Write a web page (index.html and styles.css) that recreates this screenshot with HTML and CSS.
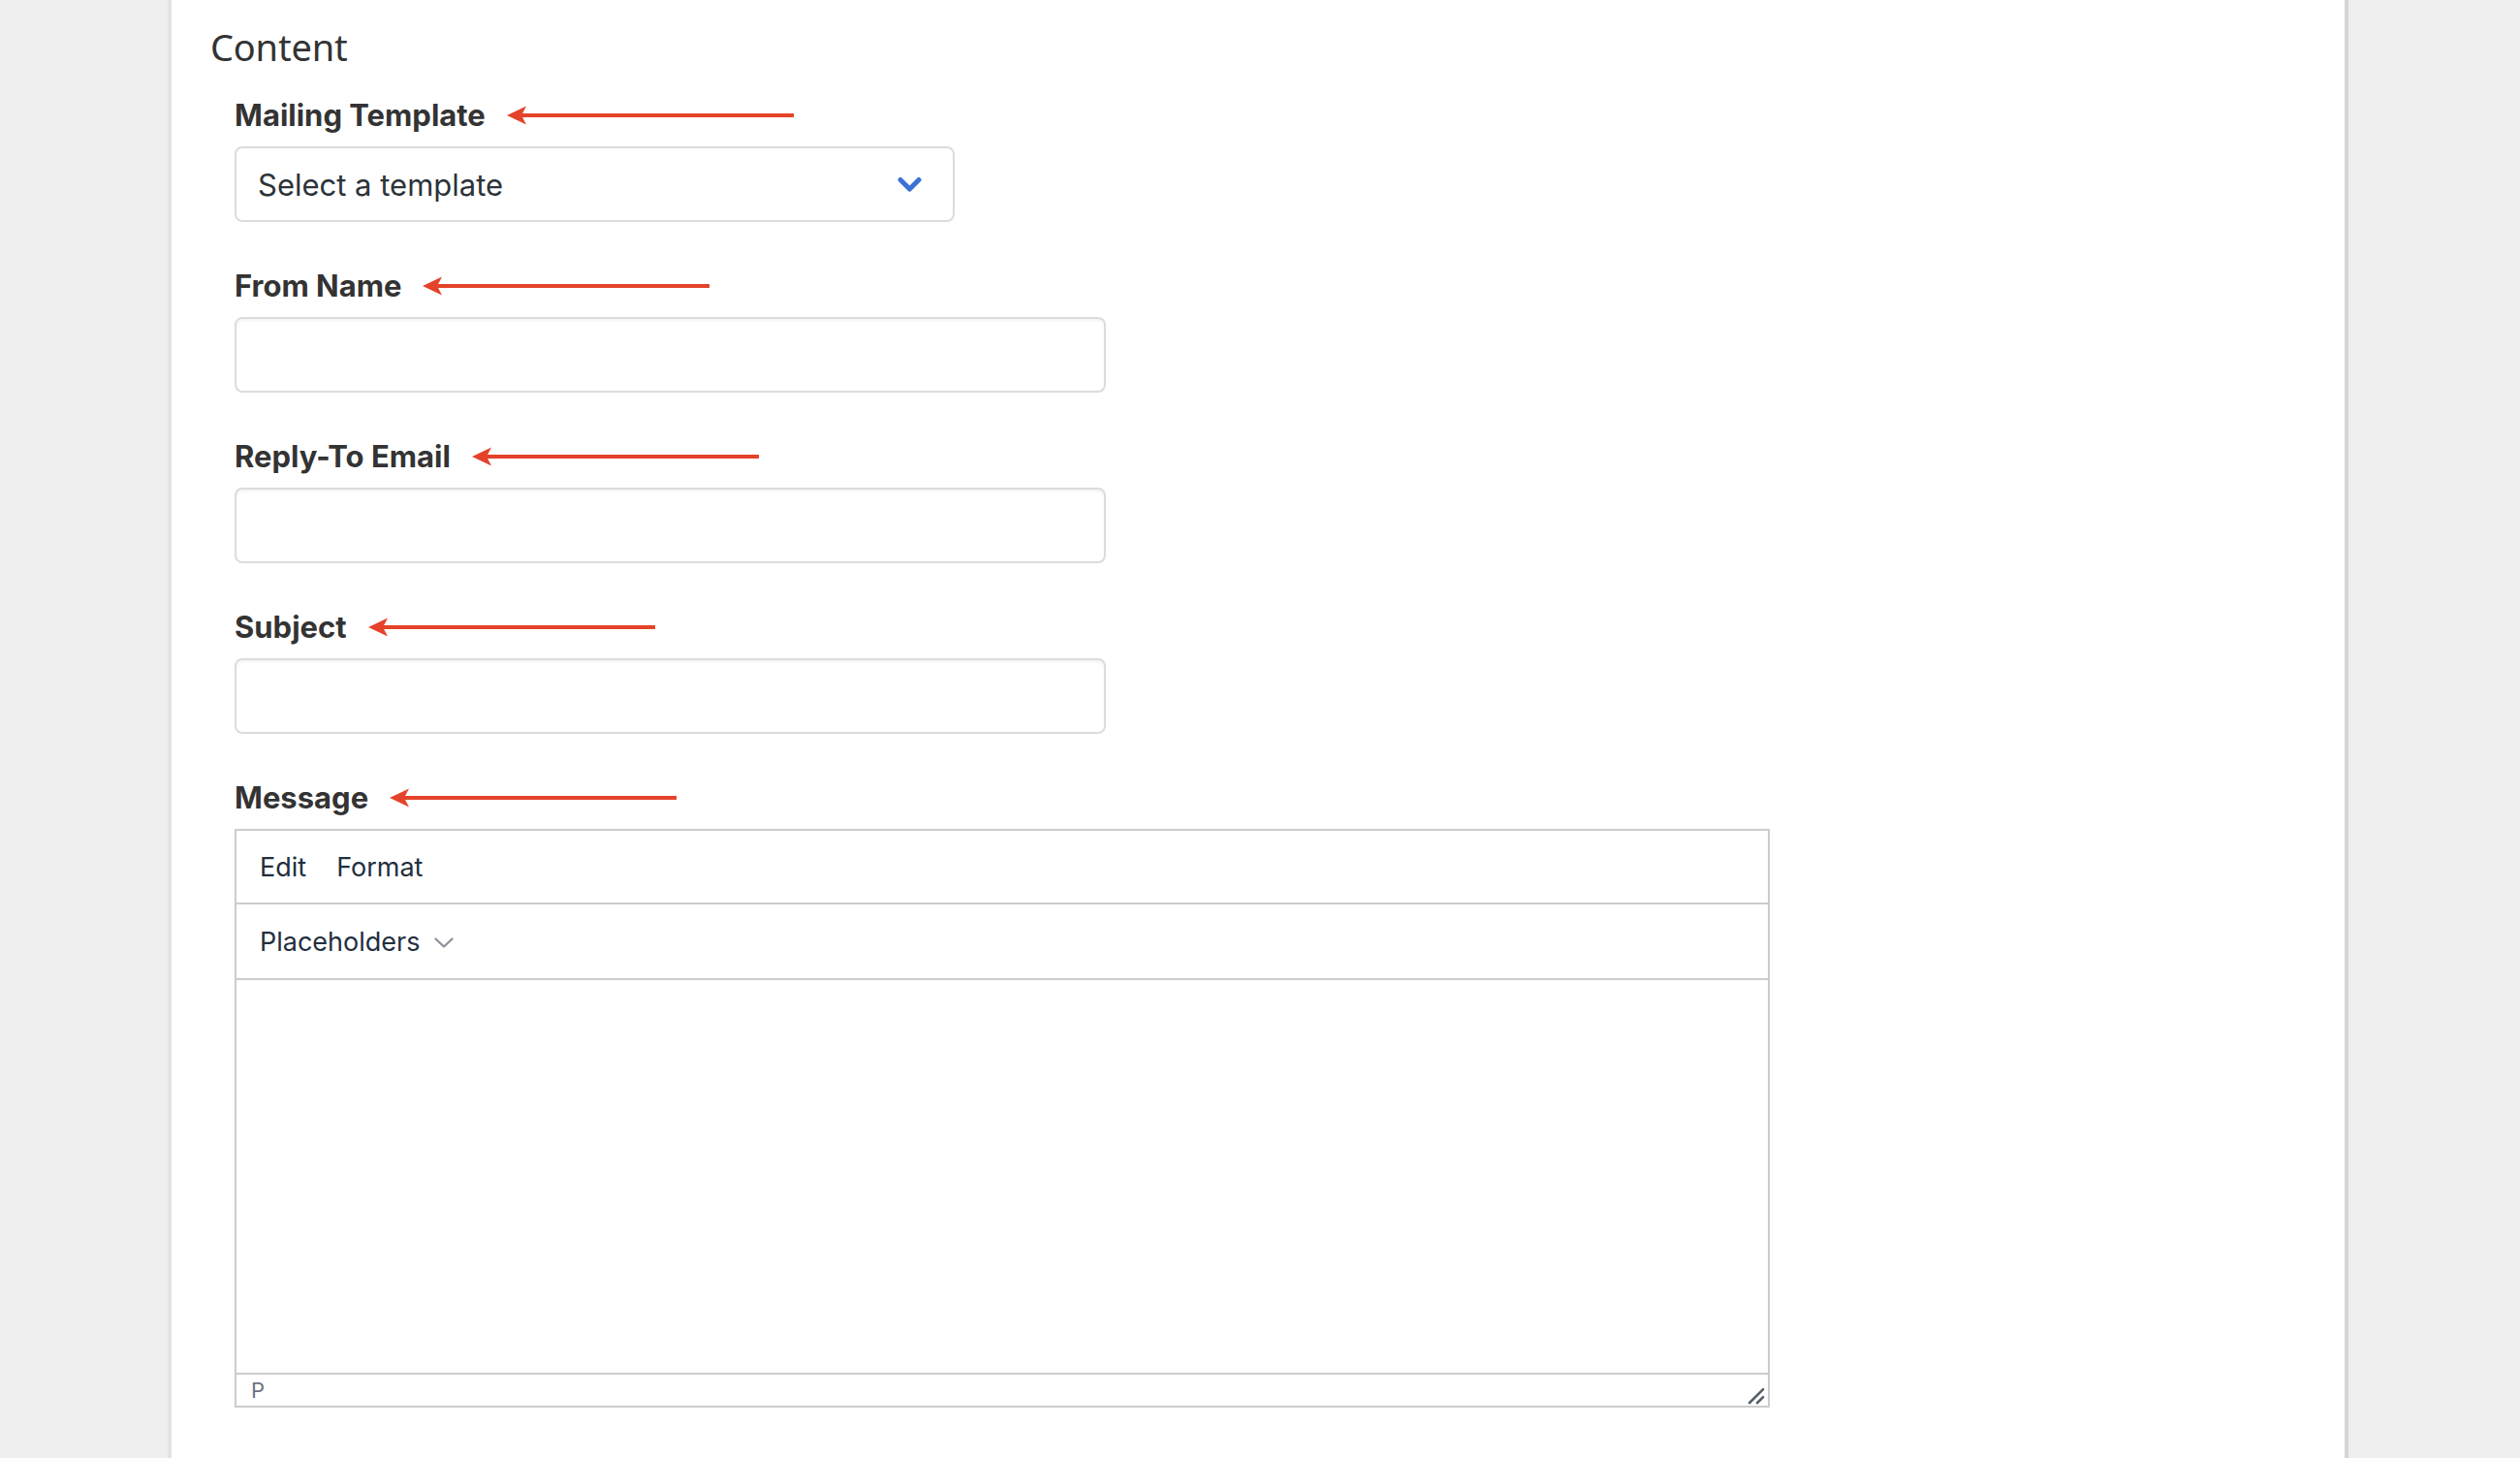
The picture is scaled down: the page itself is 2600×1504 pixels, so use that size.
FILE: index.html
```html
<!DOCTYPE html>
<html lang="en">
<head>
<meta charset="utf-8">
<title>Content</title>
<link rel="stylesheet" href="styles.css">
</head>
<body>
<main class="panel">
  <h2 class="section-title">Content</h2>
  <div class="fields">
    <div class="field">
      <div class="label-row">
        <label class="label">Mailing Template</label>
        <svg class="arrow" viewBox="0 0 296 20" width="296" height="20" aria-hidden="true"><path d="M0 10 L20 0.5 L15 10 L20 19.5 Z" fill="#e4432a"/><rect x="14" y="8" width="282" height="4" fill="#e4432a"/></svg>
      </div>
      <div class="select">
        <span class="select-text">Select a template</span>
        <svg class="select-chevron" viewBox="0 0 25 17" width="25" height="17" aria-hidden="true"><polyline points="3,3.5 12.5,13 22,3.5" fill="none" stroke="#3a72d6" stroke-width="5" stroke-linecap="round" stroke-linejoin="round"/></svg>
      </div>
    </div>
    <div class="field">
      <div class="label-row">
        <label class="label">From Name</label>
        <svg class="arrow" viewBox="0 0 296 20" width="296" height="20" aria-hidden="true"><path d="M0 10 L20 0.5 L15 10 L20 19.5 Z" fill="#e4432a"/><rect x="14" y="8" width="282" height="4" fill="#e4432a"/></svg>
      </div>
      <div class="input"></div>
    </div>
    <div class="field">
      <div class="label-row">
        <label class="label">Reply-To Email</label>
        <svg class="arrow" viewBox="0 0 296 20" width="296" height="20" aria-hidden="true"><path d="M0 10 L20 0.5 L15 10 L20 19.5 Z" fill="#e4432a"/><rect x="14" y="8" width="282" height="4" fill="#e4432a"/></svg>
      </div>
      <div class="input"></div>
    </div>
    <div class="field">
      <div class="label-row">
        <label class="label">Subject</label>
        <svg class="arrow" viewBox="0 0 296 20" width="296" height="20" aria-hidden="true"><path d="M0 10 L20 0.5 L15 10 L20 19.5 Z" fill="#e4432a"/><rect x="14" y="8" width="282" height="4" fill="#e4432a"/></svg>
      </div>
      <div class="input"></div>
    </div>
    <div class="field">
      <div class="label-row">
        <label class="label">Message</label>
        <svg class="arrow" viewBox="0 0 296 20" width="296" height="20" aria-hidden="true"><path d="M0 10 L20 0.5 L15 10 L20 19.5 Z" fill="#e4432a"/><rect x="14" y="8" width="282" height="4" fill="#e4432a"/></svg>
      </div>
      <div class="editor">
        <div class="menubar">
          <span class="menu-item">Edit</span>
          <span class="menu-item">Format</span>
        </div>
        <div class="toolbar">
          <span class="menu-item">Placeholders</span>
          <svg class="tb-chevron" viewBox="0 0 20 11" width="20" height="11" aria-hidden="true"><polyline points="1.5,1.5 10,9.5 18.5,1.5" fill="none" stroke="#8b9099" stroke-width="2.2" stroke-linecap="round" stroke-linejoin="round"/></svg>
        </div>
        <div class="edit-area"></div>
        <div class="statusbar">
          <span class="path">P</span>
          <svg class="resize" viewBox="0 0 20 20" width="20" height="20" aria-hidden="true"><path d="M16.2 2.2A1 1 0 1 1 18 4L4 18A1 1 0 1 1 2 16.2L16.2 2.2zM16.2 10.2A1 1 0 1 1 18 12L12 18A1 1 0 1 1 10 16.2l6.2-6z" fill="#565e69"/></svg>
        </div>
      </div>
    </div>
  </div>
</main>
</body>
</html>
```
FILE: styles.css
```css
* { box-sizing: border-box; }

html, body {
  margin: 0;
  padding: 0;
}

body {
  background: #efefef;
  font-family: Inter, "Liberation Sans", sans-serif;
  color: #333;
}

.panel {
  margin-left: 173px;
  width: 2250px;
  min-height: 1504px;
  background: #fff;
  border-left: 4px solid #e3e3e3;
  border-right: 4px solid #d6d6d6;
  padding: 25px 0 40px 40px;
}

.section-title {
  margin: 0 0 30px 0;
  font-family: "Noto Sans", "Open Sans", sans-serif;
  font-weight: 400;
  font-size: 38px;
  line-height: 46px;
  color: #333;
  letter-spacing: -0.2px;
}

.fields {
  margin-left: 25px;
  display: flex;
  flex-direction: column;
  gap: 48px;
}

.field {
  display: flex;
  flex-direction: column;
}

.label-row {
  display: flex;
  align-items: center;
  height: 36px;
  margin-bottom: 14px;
}

.label {
  font-family: Inter, "Liberation Sans", sans-serif;
  font-weight: 700;
  font-size: 31px;
  line-height: 36px;
  color: #333;
  letter-spacing: 0;
}

.arrow {
  margin-left: 22px;
  display: block;
  flex: none;
}

.select {
  width: 743px;
  height: 78px;
  border: 2px solid #dcdcdc;
  border-radius: 8px;
  background: #fff;
  display: flex;
  align-items: center;
  justify-content: space-between;
  padding: 0 32px 0 22px;
}

.select-text {
  font-size: 31px;
  color: #2c3338;
  letter-spacing: 0;
}

.select-chevron {
  display: block;
}

.input {
  width: 899px;
  height: 78px;
  border: 2px solid #dcdcdc;
  border-radius: 8px;
  background: #fff;
  box-shadow: inset 0 2px 3px rgba(0, 0, 0, 0.05);
}

.editor {
  width: 1584px;
  height: 597px;
  border: 2px solid #cccccc;
  display: flex;
  flex-direction: column;
  background: #fff;
}

.menubar {
  height: 76px;
  border-bottom: 2px solid #cccccc;
  display: flex;
  align-items: center;
  gap: 31px;
  padding-left: 24px;
  flex: none;
}

.toolbar {
  height: 78px;
  border-bottom: 2px solid #cccccc;
  display: flex;
  align-items: center;
  gap: 14px;
  padding-left: 24px;
  flex: none;
}

.menu-item {
  font-family: Inter, "Liberation Sans", sans-serif;
  font-size: 27px;
  color: #222f3e;
}

.tb-chevron {
  display: block;
  margin-top: 2px;
}

.edit-area {
  flex: 1;
}

.statusbar {
  height: 34px;
  border-top: 2px solid #cccccc;
  display: flex;
  align-items: center;
  justify-content: space-between;
  padding: 0 2px 0 15px;
  flex: none;
}

.path {
  font-size: 22px;
  color: #6b7280;
}

.resize {
  display: block;
  align-self: flex-end;
  margin-bottom: 0;
}
```
